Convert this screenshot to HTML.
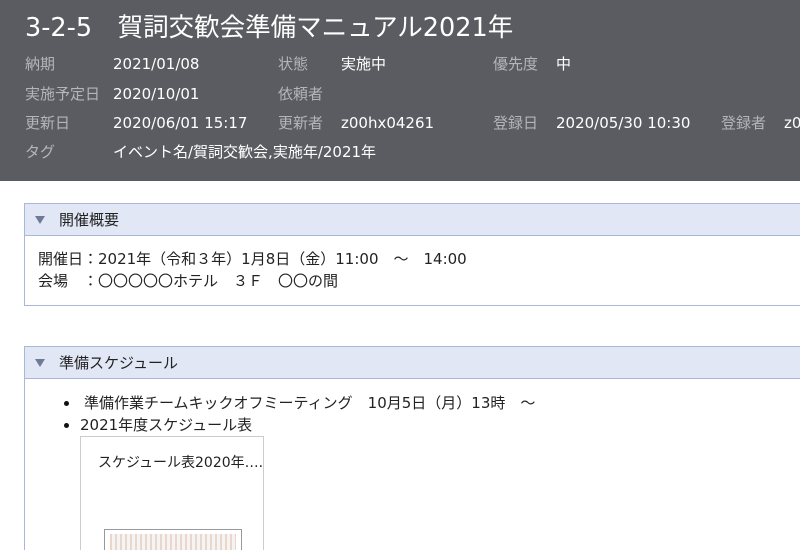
<!DOCTYPE html>
<html><head><meta charset="utf-8"><style>
*{margin:0;padding:0;box-sizing:border-box}
html,body{width:800px;height:550px;overflow:hidden}
body{background:#fff;font-family:"DejaVu Sans","Noto Sans CJK JP",sans-serif;position:relative;color:#222}
.hd{position:absolute;left:0;top:0;width:800px;height:181px;background:#5b5c61}
.t{position:absolute;left:25px;top:11px;font-size:25.5px;line-height:34px;color:#fff;white-space:nowrap}
.a{position:absolute;font-size:15px;line-height:20px;white-space:nowrap}
.l{color:#b4b5b9}.v{color:#fff}
.ph{position:absolute;left:24px;width:790px;height:33px;background:#e1e7f4;border:1px solid #a9b8da}
.ph span{position:absolute;left:34px;top:6px;font-size:15px;line-height:20px;color:#222}
.ph i{position:absolute;left:10px;top:12px;width:0;height:0;border-left:5px solid transparent;border-right:5px solid transparent;border-top:8px solid #6f7a96}
.pb{position:absolute;left:24px;width:790px;border:1px solid #a9b8da;border-top:none}
.x{position:absolute;font-size:15px;line-height:20px;white-space:nowrap;color:#222}
</style></head><body>
<div class="hd">
<div class="t">3-2-5　賀詞交歓会準備マニュアル2021年</div>
<div class="a l" style="left:25px;top:54px">納期</div><div class="a v" style="left:113px;top:54px">2021/01/08</div>
<div class="a l" style="left:278px;top:54px">状態</div><div class="a v" style="left:341px;top:54px">実施中</div>
<div class="a l" style="left:493px;top:54px">優先度</div><div class="a v" style="left:556px;top:54px">中</div>
<div class="a l" style="left:25px;top:84px">実施予定日</div><div class="a v" style="left:113px;top:84px">2020/10/01</div>
<div class="a l" style="left:278px;top:84px">依頼者</div>
<div class="a l" style="left:25px;top:113px">更新日</div><div class="a v" style="left:113px;top:113px">2020/06/01 15:17</div>
<div class="a l" style="left:278px;top:113px">更新者</div><div class="a v" style="left:341px;top:113px">z00hx04261</div>
<div class="a l" style="left:493px;top:113px">登録日</div><div class="a v" style="left:556px;top:113px">2020/05/30 10:30</div>
<div class="a l" style="left:721px;top:113px">登録者</div><div class="a v" style="left:784px;top:113px">z00hx</div>
<div class="a l" style="left:25px;top:142px">タグ</div><div class="a v" style="left:113px;top:142px">イベント名/賀詞交歓会,実施年/2021年</div>
</div>
<div class="ph" style="top:203px"><i></i><span>開催概要</span></div>
<div class="pb" style="top:236px;height:70px"></div>
<div class="x" style="left:38px;top:249px">開催日：2021年（令和３年）1月8日（金）11:00　～　14:00</div>
<div class="x" style="left:38px;top:271px">会場　：〇〇〇〇〇ホテル　３Ｆ　〇〇の間</div>
<div class="ph" style="top:346px"><i></i><span>準備スケジュール</span></div>
<div class="pb" style="top:379px;height:171px;border-bottom:none"></div>
<div style="position:absolute;left:64px;top:401px;width:5px;height:5px;border-radius:50%;background:#111"></div>
<div class="x" style="left:84px;top:393px">準備作業チームキックオフミーティング　10月5日（月）13時　～</div>
<div style="position:absolute;left:64px;top:423px;width:5px;height:5px;border-radius:50%;background:#111"></div>
<div class="x" style="left:80px;top:415px">2021年度スケジュール表</div>
<div style="position:absolute;left:80px;top:436px;width:184px;height:114px;border:1px solid #ccc;border-bottom:none"></div>
<div class="x" style="left:98px;top:453px;font-size:14px">スケジュール表2020年….</div>
<div style="position:absolute;left:104px;top:529px;width:138px;height:21px;border:1px solid #999;border-bottom:none;background:#fff"></div>
<div style="position:absolute;left:110px;top:534px;width:126px;height:16px;background:repeating-linear-gradient(90deg,#e9d2c6 0 2px,#f3f3f3 2px 5px);opacity:.9"></div>
</body></html>
